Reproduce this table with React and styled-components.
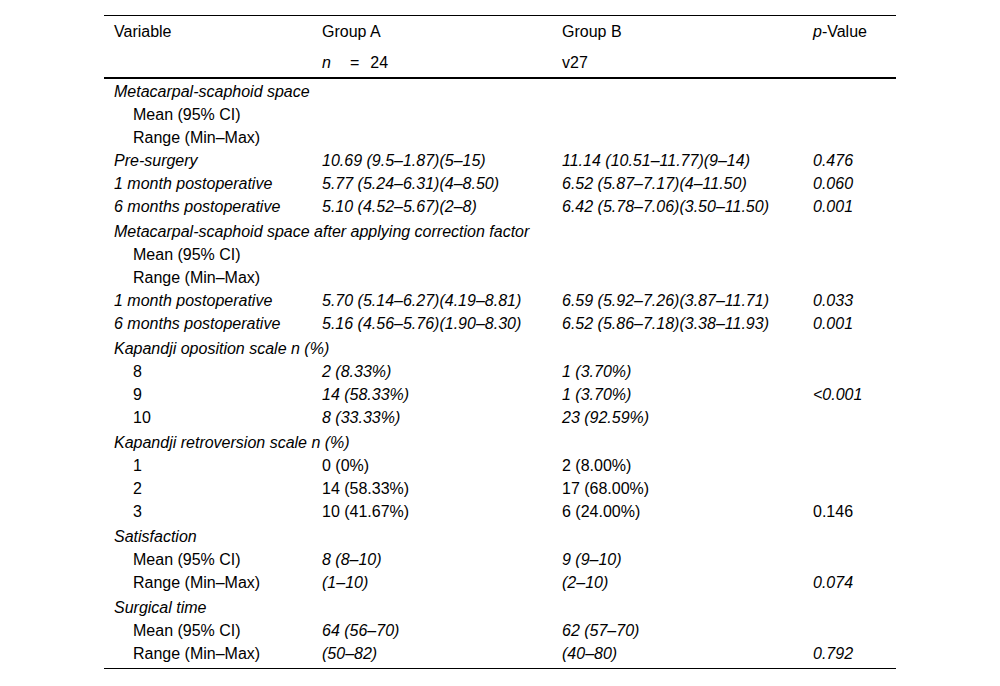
import styled, { createGlobalStyle } from "styled-components";

const GlobalStyle = createGlobalStyle`
    html, body {
        margin: 0;
        padding: 0;
        background: #fff;
    }
    body {
        font-family: "Liberation Sans", Arial, Helvetica, sans-serif;
        color: #000;
    }
`;

const Page = styled.div`
    width: 1000px;
    height: 686px;
    padding-top: 15px;
    box-sizing: border-box;
`;

const Table = styled.table`
    width: 792px;
    margin: 0 auto;
    border-collapse: collapse;
    table-layout: fixed;
    font-size: 16px;
    line-height: 18px;
    border-bottom: 1px solid #000;
`;

const HeadRow = styled.tr`
    height: 31px;
    border-top: ${(props) => (props.$first ? "1px solid #000" : "none")};
    border-bottom: ${(props) => (props.$last ? "2px solid #000" : "none")};
`;

const HeadCell = styled.th`
    text-align: left;
    font-weight: normal;
    padding: 2px 10px 0;
    vertical-align: middle;
`;

const Row = styled.tr`
    height: ${(props) => (props.$group ? "25px" : "23px")};
`;

const Cell = styled.td`
    padding: ${(props) => (props.$group ? "3px 10px 0" : "2px 10px 0")};
    padding-left: ${(props) => (props.$indent ? "29px" : "10px")};
    font-style: ${(props) => (props.$italic ? "italic" : "normal")};
    vertical-align: middle;
    white-space: nowrap;
`;

const Spacer = styled.tr`
    height: 4px;
`;

const Eq = styled.span`
    margin: 0 11px 0 19px;
`;

const cols = [208, 240, 251, 93];

// kind: group | indent | plain ; it = italic label + values, vit = italic values only
const rows = [
    { kind: "group", label: "Metacarpal-scaphoid space" },
    { kind: "indent", label: "Mean (95% CI)" },
    { kind: "indent", label: "Range (Min–Max)" },
    { kind: "plain", it: true, label: "Pre-surgery", a: "10.69 (9.5–1.87)(5–15)", b: "11.14 (10.51–11.77)(9–14)", p: "0.476" },
    { kind: "plain", it: true, label: "1 month postoperative", a: "5.77 (5.24–6.31)(4–8.50)", b: "6.52 (5.87–7.17)(4–11.50)", p: "0.060" },
    { kind: "plain", it: true, label: "6 months postoperative", a: "5.10 (4.52–5.67)(2–8)", b: "6.42 (5.78–7.06)(3.50–11.50)", p: "0.001" },
    { kind: "group", label: "Metacarpal-scaphoid space after applying correction factor" },
    { kind: "indent", label: "Mean (95% CI)" },
    { kind: "indent", label: "Range (Min–Max)" },
    { kind: "plain", it: true, label: "1 month postoperative", a: "5.70 (5.14–6.27)(4.19–8.81)", b: "6.59 (5.92–7.26)(3.87–11.71)", p: "0.033" },
    { kind: "plain", it: true, label: "6 months postoperative", a: "5.16 (4.56–5.76)(1.90–8.30)", b: "6.52 (5.86–7.18)(3.38–11.93)", p: "0.001" },
    { kind: "group", label: "Kapandji oposition scale n (%)" },
    { kind: "indent", vit: true, label: "8", a: "2 (8.33%)", b: "1 (3.70%)" },
    { kind: "indent", vit: true, label: "9", a: "14 (58.33%)", b: "1 (3.70%)", p: "<0.001" },
    { kind: "indent", vit: true, label: "10", a: "8 (33.33%)", b: "23 (92.59%)" },
    { kind: "group", label: "Kapandji retroversion scale n (%)" },
    { kind: "indent", label: "1", a: "0 (0%)", b: "2 (8.00%)" },
    { kind: "indent", label: "2", a: "14 (58.33%)", b: "17 (68.00%)" },
    { kind: "indent", label: "3", a: "10 (41.67%)", b: "6 (24.00%)", p: "0.146" },
    { kind: "group", label: "Satisfaction" },
    { kind: "indent", vit: true, label: "Mean (95% CI)", a: "8 (8–10)", b: "9 (9–10)" },
    { kind: "indent", vit: true, label: "Range (Min–Max)", a: "(1–10)", b: "(2–10)", p: "0.074" },
    { kind: "group", label: "Surgical time" },
    { kind: "indent", vit: true, label: "Mean (95% CI)", a: "64 (56–70)", b: "62 (57–70)" },
    { kind: "indent", vit: true, label: "Range (Min–Max)", a: "(50–82)", b: "(40–80)", p: "0.792" },
];

export default function App() {
    return (
        <Page>
            <GlobalStyle />
            <Table>
                <colgroup>
                    {cols.map((w, i) => <col key={i} style={{ width: w }} />)}
                </colgroup>
                <thead>
                    <HeadRow $first>
                        <HeadCell>Variable</HeadCell>
                        <HeadCell>Group A</HeadCell>
                        <HeadCell>Group B</HeadCell>
                        <HeadCell><i>p</i>-Value</HeadCell>
                    </HeadRow>
                    <HeadRow $last>
                        <HeadCell />
                        <HeadCell><i>n</i><Eq>=</Eq>24</HeadCell>
                        <HeadCell>v27</HeadCell>
                        <HeadCell />
                    </HeadRow>
                </thead>
                <tbody>
                    {rows.map((r, i) => {
                        const group = r.kind === "group";
                        const valIt = r.it || r.vit;
                        return (
                            <Row key={i} $group={group}>
                                <Cell $group={group} $indent={r.kind === "indent"} $italic={group || r.it}>
                                    {r.label}
                                </Cell>
                                <Cell $group={group} $italic={valIt}>{r.a}</Cell>
                                <Cell $group={group} $italic={valIt}>{r.b}</Cell>
                                <Cell $group={group} $italic={valIt}>{r.p}</Cell>
                            </Row>
                        );
                    })}
                    <Spacer><td colSpan={4} /></Spacer>
                </tbody>
            </Table>
        </Page>
    );
}
